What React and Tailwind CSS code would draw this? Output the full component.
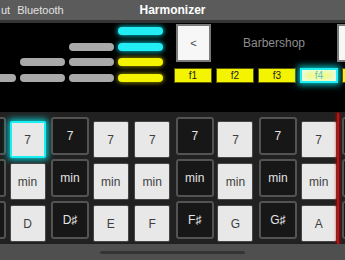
import React from "react";

const font = { fontFamily: '"Liberation Sans", Arial, "DejaVu Sans", sans-serif' };

const meterRows = [
  [null, null, null, "cyan"],
  [null, null, "gray", "cyan"],
  [null, "gray", "gray", "yellow"],
  ["gray", "gray", "gray", "yellow"],
];

function Bar({ kind }) {
  if (!kind) return <div className="h-[8px] w-[45px]" />;
  if (kind === "gray") return <div className="h-[8px] w-[45px] rounded-full bg-[#a9a9a9]" />;
  if (kind === "cyan")
    return <div className="h-[8px] w-[45px] rounded-full bg-[#22ecf4] shadow-[0_0_5px_1px_rgba(0,230,240,0.75)]" />;
  return <div className="h-[8px] w-[45px] rounded-full bg-[#f4f400] shadow-[0_0_4px_1px_rgba(230,230,0,0.55)]" />;
}

const cols = [
  { dark: true, labels: ["", "", ""] },
  { dark: false, labels: ["7", "min", "D"], sel: true },
  { dark: true, labels: ["7", "min", "D♯"] },
  { dark: false, labels: ["7", "min", "E"] },
  { dark: false, labels: ["7", "min", "F"] },
  { dark: true, labels: ["7", "min", "F♯"] },
  { dark: false, labels: ["7", "min", "G"] },
  { dark: true, labels: ["7", "min", "G♯"] },
  { dark: false, labels: ["7", "min", "A"], red: true },
  { dark: true, labels: ["", "", ""] },
];

function Column({ c }) {
  if (c.dark) {
    return (
      <div className="flex flex-col gap-[4px] pt-[5px] pl-[1.4px]">
        {c.labels.map((l, i) => (
          <div
            key={i}
            className="flex h-[38px] w-[38px] items-center justify-center rounded-[3px] border-2 border-[#535353] bg-[#171717] text-[12px] text-[#e4e4e4]"
          >
            {l}
          </div>
        ))}
      </div>
    );
  }
  return (
    <div className="flex flex-col gap-[5px] pt-[9px] pl-[1.5px]">
      {c.labels.map((l, i) => (
        <div
          key={i}
          className={
            "flex h-[37px] w-[36px] items-center justify-center rounded-[2px] bg-[#e8e8e8] text-[12px] text-[#3e3e3e] " +
            (c.sel && i === 0
              ? "border-2 border-[#19eef2] shadow-[0_0_6px_2px_rgba(0,235,240,0.8)]"
              : "border border-[#474747]")
          }
        >
          {l}
        </div>
      ))}
    </div>
  );
}

export default function App() {
  return (
    <div className="h-[260px] w-[345px] overflow-hidden bg-black" style={font}>
      {/* top bar */}
      <div className="grid h-[20px] grid-cols-[1fr_auto_1fr] items-center bg-[#5b5b5b]">
        <div className="flex items-center gap-[7px] pl-[1px] text-[11px] text-[#e2e2e2]">
          <span>ut</span>
          <span>Bluetooth</span>
        </div>
        <div className="text-[12px] font-bold text-white">Harmonizer</div>
        <div />
      </div>
      <div className="h-[3px] bg-[#343434]" />

      {/* panel */}
      <div className="flex h-[89px] bg-black">
        <div className="w-[173px] shrink-0 overflow-hidden pt-[4px]">
          <div className="ml-[-29px] flex flex-col gap-[7.7px]">
            {meterRows.map((r, i) => (
              <div key={i} className="flex gap-[4px]">
                {r.map((k, j) => (
                  <Bar key={j} kind={k} />
                ))}
              </div>
            ))}
          </div>
        </div>
        <div className="flex shrink-0 flex-col pt-[1px]">
          <div className="flex h-[38px] items-stretch">
            <div className="ml-[3px] flex w-[35px] items-center justify-center border-2 border-[#7a7a7a] bg-[#f7f7f7] text-[11px] text-[#444]">
              &lt;
            </div>
            <div className="flex w-[126px] items-center justify-center text-[12px] text-[#8c8c8c]">
              Barbershop
            </div>
            <div className="w-[30px] border-2 border-[#7a7a7a] bg-[#f7f7f7]" />
          </div>
          <div className="mt-[6px] flex h-[15px] gap-[4px] pl-[1px]">
            {["f1", "f2", "f3"].map((f) => (
              <div
                key={f}
                className="flex w-[38px] items-center justify-center border border-[#5a5a00] bg-[#f4f400] text-[10px] text-[#222]"
              >
                {f}
              </div>
            ))}
            <div className="flex w-[38px] items-center justify-center border-2 border-[#1ef0f4] bg-[#f3f640] text-[10px] text-[#58c4d6] shadow-[0_0_6px_2px_rgba(0,235,240,0.8),inset_0_0_6px_3px_rgba(235,255,255,0.9)]">
              f4
            </div>
            <div className="w-[30px] border border-[#5a5a00] bg-[#f4f400]" />
          </div>
        </div>
      </div>

      {/* keyboard */}
      <div className="h-[132px] overflow-hidden bg-[#212121]">
        <div className="ml-[-33.6px] flex h-full">
          {cols.map((c, i) =>
            c.red ? (
              <div key={i} className="flex h-full w-[39.6px] shrink-0">
                <div className="w-[37.6px]">
                  <Column c={c} />
                </div>
                <div className="mt-[1px] w-[2px] bg-[#c01010] shadow-[0_0_3px_1px_rgba(200,0,0,0.6)]" />
              </div>
            ) : (
              <div key={i} className={"h-full w-[41.6px] shrink-0 " + (i === 9 ? "ml-[2px]" : "")}>
                <Column c={c} />
              </div>
            )
          )}
        </div>
      </div>

      {/* bottom */}
      <div className="h-[16px] bg-[#4f4f4f] pt-[7px]">
        <div className="ml-[100px] h-[3px] w-[145px] rounded-full bg-[#343434]" />
      </div>
    </div>
  );
}
